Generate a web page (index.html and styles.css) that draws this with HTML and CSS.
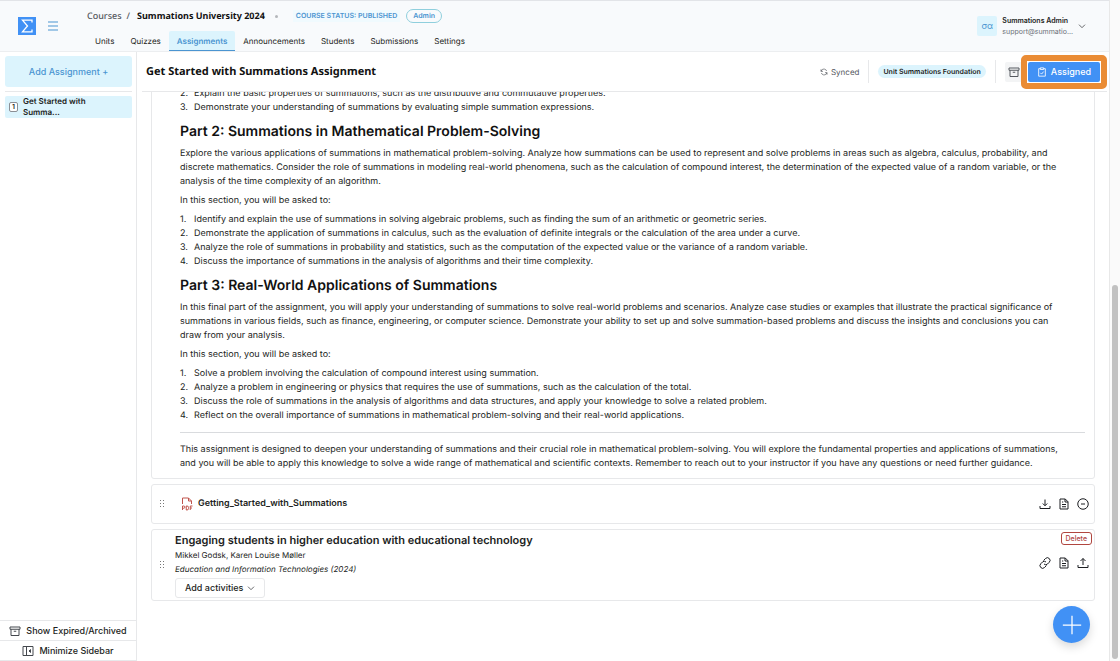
FILE: index.html
```html
<!DOCTYPE html>
<html lang="en">
  <head>
    <meta charset="UTF-8" />
    <meta name="viewport" content="width=device-width, initial-scale=1.0" />
    <title>Get Started with Summations Assignment</title>
    <link rel="stylesheet" href="styles.css">
  </head>
  <body>
    <!-- shared icons -->
    <svg class="sprite" aria-hidden="true">
      <symbol id="archive" viewBox="0 0 24 24">
        <path d="M2 4h20v4.500H2zM4 8.500V21h16V8.500M9.500 12.500h5" />
      </symbol>
      <symbol id="chevron" viewBox="0 0 24 24">
        <path d="M3 8l9 9 9-9" />
      </symbol>
      <symbol id="grip" viewBox="0 0 6 10">
        <path d="M1 1.500h1M4 1.500h1M1 4.500h1M4 4.500h1M1 7.500h1M4 7.500h1" />
      </symbol>
      <symbol id="doc" viewBox="0 0 24 24">
        <path d="M4 2h10.500L20 7.500V22H4zM14 2v6h6M8 8h2.500M8 13h8M8 17.500h8" />
      </symbol>
    </svg>

    <div class="window">
      <div class="app">
        <header class="topbar">
          <a class="logo" href="#" aria-label="Home">
            <svg viewBox="0 0 18 18"><path d="M14 5.500V3.200H4.500L9.500 9l-5 5.800H14v-2.300" /></svg>
          </a>
          <button class="icon-btn burger" aria-label="Menu">
            <svg viewBox="0 0 12 12"><path d="M1 2h10M1 6h10M1 10h10" /></svg>
          </button>
          <div class="course">
            <div class="crumbs">
              <a class="crumb" href="#">Courses</a>
              <span class="slash">/</span>
              <strong>Summations University 2024</strong>
              <span class="dot"></span>
              <span class="status">COURSE STATUS: PUBLISHED</span>
              <span class="role">Admin</span>
            </div>
            <nav class="tabs">
              <a href="#">Units</a>
              <a href="#">Quizzes</a>
              <a class="active" href="#">Assignments</a>
              <a href="#">Announcements</a>
              <a href="#">Students</a>
              <a href="#">Submissions</a>
              <a href="#">Settings</a>
            </nav>
          </div>
          <button class="user">
            <span class="avatar">σα</span>
            <span class="user-info">
              <span class="user-name">Summations Admin</span>
              <span class="user-mail">support@summatio...</span>
            </span>
            <svg class="chev"><use href="#chevron" /></svg>
          </button>
        </header>

        <div class="columns">
          <aside class="sidebar">
            <div class="side-top">
              <button class="add-btn">Add Assignment +</button>
            </div>
            <a class="side-item" href="#">
              <span class="num">1</span>
              <span>Get Started with Summa...</span>
            </a>
            <div class="side-bottom">
              <button><svg><use href="#archive" /></svg>Show Expired/Archived</button>
              <button>
                <svg viewBox="0 0 24 24"><path d="M2 3h20v18H2zM9 3v18M17 9l-3 3 3 3z" /></svg>Minimize Sidebar
              </button>
            </div>
          </aside>

          <main>
            <div class="title-bar">
              <h1>Get Started with Summations Assignment</h1>
              <span class="synced">
                <svg viewBox="0 0 24 24"><path d="M3 4v6h6M21 20v-6h-6M20 9a9 9 0 0 0-15-3L3 10M4 15a9 9 0 0 0 15 3l2-4" /></svg>Synced
              </span>
              <span class="unit-wrap"><span class="unit">Unit Summations Foundation</span></span>
              <button class="archive-btn" aria-label="Archive"><svg><use href="#archive" /></svg></button>
              <span class="spotlight">
                <button class="assigned">
                  <svg viewBox="0 0 24 24"><path d="M8 4H4v18h16V4h-4M8 2h8v4H8zM8 14l3 3 5-6" /></svg>Assigned
                </button>
              </span>
            </div>

            <div class="content">
              <article class="card text">
                <ol start="2">
                  <li>Explain the basic properties of summations, such as the distributive and commutative properties.</li>
                  <li>Demonstrate your understanding of summations by evaluating simple summation expressions.</li>
                </ol>
                <h2>Part 2: Summations in Mathematical Problem-Solving</h2>
                <p>Explore the various applications of summations in mathematical problem-solving. Analyze how summations can be used to represent and solve problems in areas such as algebra, calculus, probability, and discrete mathematics. Consider the role of summations in modeling real-world phenomena, such as the calculation of compound interest, the determination of the expected value of a random variable, or the analysis of the time complexity of an algorithm.</p>
                <p>In this section, you will be asked to:</p>
                <ol>
                  <li>Identify and explain the use of summations in solving algebraic problems, such as finding the sum of an arithmetic or geometric series.</li>
                  <li>Demonstrate the application of summations in calculus, such as the evaluation of definite integrals or the calculation of the area under a curve.</li>
                  <li>Analyze the role of summations in probability and statistics, such as the computation of the expected value or the variance of a random variable.</li>
                  <li>Discuss the importance of summations in the analysis of algorithms and their time complexity.</li>
                </ol>
                <h2>Part 3: Real-World Applications of Summations</h2>
                <p>In this final part of the assignment, you will apply your understanding of summations to solve real-world problems and scenarios. Analyze case studies or examples that illustrate the practical significance of summations in various fields, such as finance, engineering, or computer science. Demonstrate your ability to set up and solve summation-based problems and discuss the insights and conclusions you can draw from your analysis.</p>
                <p>In this section, you will be asked to:</p>
                <ol>
                  <li>Solve a problem involving the calculation of compound interest using summation.</li>
                  <li>Analyze a problem in engineering or physics that requires the use of summations, such as the calculation of the total.</li>
                  <li>Discuss the role of summations in the analysis of algorithms and data structures, and apply your knowledge to solve a related problem.</li>
                  <li>Reflect on the overall importance of summations in mathematical problem-solving and their real-world applications.</li>
                </ol>
                <hr>
                <p>This assignment is designed to deepen your understanding of summations and their crucial role in mathematical problem-solving. You will explore the fundamental properties and applications of summations, and you will be able to apply this knowledge to solve a wide range of mathematical and scientific contexts. Remember to reach out to your instructor if you have any questions or need further guidance.</p>
              </article>

              <section class="card file">
                <svg class="grip"><use href="#grip" /></svg>
                <svg class="pdf" viewBox="0 0 24 28">
                  <path d="M3 14V2h12l6 6v6M15 2v6h6" />
                  <path d="M3 26v-8h2.500a2 2 0 0 1 0 4.500H3M10.500 18v8h1.500a3 3 0 0 0 3-3v-2a3 3 0 0 0-3-3zM18.500 26v-8H23M18.500 22H22" />
                </svg>
                <a class="file-name" href="#">Getting_Started_with_Summations</a>
                <div class="actions">
                  <button class="icon-btn" aria-label="Download"><svg viewBox="0 0 24 24"><path d="M12 3v12M7.500 11l4.500 4.500 4.500-4.500M2 16v5h20v-5" /></svg></button>
                  <button class="icon-btn" aria-label="Notes"><svg><use href="#doc" /></svg></button>
                  <button class="icon-btn" aria-label="Remove"><svg viewBox="0 0 24 24"><circle cx="12" cy="12" r="10.500" /><path d="M8 12h8" /></svg></button>
                </div>
              </section>

              <section class="card paper">
                <svg class="grip"><use href="#grip" /></svg>
                <div class="paper-info">
                  <h3>Engaging students in higher education with educational technology</h3>
                  <p>Mikkel Godsk, Karen Louise Møller</p>
                  <p><em>Education and Information Technologies (2024)</em></p>
                  <button class="activities">Add activities <svg class="chev"><use href="#chevron" /></svg></button>
                </div>
                <div class="paper-side">
                  <button class="delete">Delete</button>
                  <div class="actions">
                    <button class="icon-btn" aria-label="Copy link"><svg viewBox="0 0 24 24"><path d="M9 7l4-4a5 5 0 0 1 7.500 7.500l-3.500 3.500a5 5 0 0 1-7 0M15 17l-4 4a5 5 0 0 1-7.500-7.500L7 10a5 5 0 0 1 7 0" /></svg></button>
                    <button class="icon-btn" aria-label="Notes"><svg><use href="#doc" /></svg></button>
                    <button class="icon-btn" aria-label="Upload"><svg viewBox="0 0 24 24"><path d="M12 16V3M7 8l5-5 5 5M2 16v5h20v-5" /></svg></button>
                  </div>
                </div>
              </section>
            </div>
          </main>
        </div>
      </div>
      <div class="scrollbar"><div class="thumb"></div></div>
    </div>

    <button class="fab" aria-label="Add"><svg viewBox="0 0 24 24"><path d="M12 1v22M1 12h22" /></svg></button>
  </body>
</html>
```
FILE: styles.css
```css
* {
  box-sizing: border-box;
}
:root {
  --blue: #4191f5;
  --link: #4b95d1;
  --pale: #dcf4fd;
  --line: #e7e8ea;
}
body {
  margin: 0;
  font-family: Inter, "Liberation Sans", sans-serif;
  font-size: 9px;
  line-height: 14px;
  text-rendering: geometricPrecision;
  color: #1c1e22;
  background-color: white;
}
h1,
h2,
h3,
p,
ol {
  margin: 0;
}
a {
  color: inherit;
  text-decoration: none;
}
button {
  display: flex;
  align-items: center;
  justify-content: center;
  padding: 0;
  border: none;
  background: none;
  font: inherit;
  color: inherit;
  cursor: pointer;
}
svg {
  flex: none;
  width: 12px;
  height: 12px;
  fill: none;
  stroke: currentColor;
  stroke-width: 2;
}
.sprite {
  position: absolute;
  width: 0;
  height: 0;
}
.window {
  display: flex;
  height: 100vh;
}
.app {
  flex: 1;
  min-width: 0;
  display: flex;
  flex-direction: column;
}

/* top bar */
.topbar {
  display: flex;
  align-items: center;
  height: 52px;
  flex: none;
  padding: 0 23px 0 18px;
  background-color: #f8fafc;
  border-top: 1px solid #e2e4e8;
  border-bottom: 1px solid #eceef0;
}
.logo {
  display: flex;
  background-color: var(--blue);
  color: white;
}
.logo svg {
  width: 18px;
  height: 18px;
  stroke-width: 1.3;
}
.burger {
  margin-left: 11px;
  color: var(--link);
}
.burger svg {
  stroke-width: 1;
}
.course {
  align-self: stretch;
  flex: 1;
  display: flex;
  flex-direction: column;
  justify-content: space-between;
  padding: 8px 0 0 28px;
}
.crumbs {
  display: flex;
  align-items: center;
  font-family: "Noto Sans", sans-serif;
}
.crumb,
.slash {
  color: #55585e;
  font-weight: 500;
}
.slash {
  margin: 0 7px 0 5px;
}
.crumbs strong {
  color: #111;
}
.dot {
  width: 3px;
  height: 3px;
  margin: 0 15px 0 10px;
  border-radius: 50%;
  background-color: #b4b7bb;
}
.status,
.role {
  font-family: Inter, sans-serif;
  font-size: 7px;
  line-height: 12px;
  font-weight: 600;
  color: var(--link);
}
.status {
  padding: 0 3px;
  background-color: #f0fafe;
}
.role {
  margin-left: 6px;
  padding: 0 6px;
  border: 1px solid #8fcfdd;
  border-radius: 7px;
}
.tabs {
  display: flex;
  font-size: 8px;
}
.tabs a {
  padding: 3px 8px 1px;
  line-height: 15px;
  border-bottom: 1px solid transparent;
}
.tabs .active {
  color: var(--link);
  font-weight: 600;
  background-color: var(--pale);
  border-color: var(--link);
  border-radius: 2px 2px 0 0;
}
.user {
  text-align: left;
  gap: 5px;
}
.avatar {
  width: 20px;
  line-height: 20px;
  text-align: center;
  color: var(--link);
  background-color: var(--pale);
  border-radius: 2px;
}
.user-info {
  display: flex;
  flex-direction: column;
  font-size: 7px;
  line-height: 11px;
}
.user-name {
  font-weight: 600;
}
.user-mail {
  color: #6b7078;
}
.chev {
  width: 8px;
  height: 8px;
}

/* sidebar */
.columns {
  flex: 1;
  min-height: 0;
  display: flex;
}
.sidebar {
  flex: none;
  width: 137px;
  display: flex;
  flex-direction: column;
  border-right: 1px solid var(--line);
}
.side-top {
  margin: 0 4px 0 5px;
  padding: 4px 0;
  border-bottom: 1px solid var(--line);
}
.add-btn {
  width: 100%;
  height: 31px;
  font-weight: 500;
  color: var(--link);
  background-color: var(--pale);
  border-radius: 3px;
}
.side-item {
  display: flex;
  align-items: center;
  gap: 5px;
  margin: 4px 4px 0 5px;
  padding: 0 24px 0 4px;
  font-size: 8px;
  line-height: 11px;
  font-weight: 600;
  background-color: var(--pale);
  border-radius: 2px;
}
.num {
  width: 9px;
  flex: none;
  font-size: 7px;
  line-height: 8px;
  text-align: center;
  background-color: white;
  border: 1px solid #8b8f95;
  border-radius: 2px;
}
.side-bottom {
  margin-top: auto;
  border-bottom: 1px solid var(--line);
}
.side-bottom button {
  width: 100%;
  height: 20px;
  gap: 5px;
  font-weight: 500;
  border-top: 1px solid var(--line);
}
.side-bottom svg {
  color: #44484e;
}

/* title bar */
main {
  flex: 1;
  min-width: 0;
  display: flex;
  flex-direction: column;
}
.title-bar {
  display: flex;
  align-items: center;
  flex: none;
  height: 40px;
  margin: 0 2px 0 5px;
  padding-left: 4px;
  border-bottom: 1px solid var(--line);
}
h1 {
  flex: 1;
  font-family: "Noto Sans", sans-serif;
  font-size: 11px;
  color: #111;
}
.synced {
  display: flex;
  align-items: center;
  gap: 3px;
  font-size: 8px;
  color: #55585e;
}
.synced svg {
  width: 8px;
  height: 8px;
}
.unit-wrap {
  display: flex;
  margin: 0 9px;
  padding: 5px 9px;
  border: solid var(--line);
  border-width: 0 1px;
}
.unit {
  padding: 0 5px;
  font-size: 7px;
  line-height: 13px;
  font-weight: 600;
  background-color: var(--pale);
  border-radius: 7px;
}
.archive-btn {
  width: 18px;
  height: 20px;
  color: #55585e;
  background-color: #f3f4f5;
  border-radius: 2px;
}
/* frame sits over the edge of the archive button */
.spotlight {
  z-index: 1;
  margin-left: -2px;
  padding: 1px;
  border: 6px solid #ea8c35;
  border-radius: 5px;
  background-color: white;
}
.assigned {
  height: 20px;
  padding: 0 9px;
  gap: 4px;
  font-weight: 500;
  color: white;
  background-color: var(--blue);
  border-radius: 2px;
}
.assigned svg {
  width: 10px;
  height: 10px;
}

/* assignment content */
.content {
  flex: 1;
  min-height: 0;
  overflow: hidden;
  display: flex;
  flex-direction: column;
  gap: 5px;
  padding: 0 14px;
}
.card {
  flex: none;
  border: 1px solid var(--line);
  border-radius: 3px;
}
.text {
  display: flex;
  flex-direction: column;
  gap: 5px;
  margin-top: -6px;
  padding: 0 9px 7px 28px;
}
.text p {
  padding-right: 18px;
}
.text ol {
  padding: 0;
  list-style: none;
}
.text li::before {
  content: counter(list-item) ".";
  display: inline-block;
  width: 14px;
}
.text h2 {
  margin-top: 2px;
  font-size: 14px;
  line-height: 20px;
  font-weight: 600;
  color: #111;
}
hr {
  width: 100%;
  margin: 4px 0 5px;
  border: none;
  border-top: 1px solid #d9dbde;
}
.file {
  display: flex;
  align-items: center;
  height: 40px;
  padding: 0 5px 0 7px;
}
.grip {
  width: 6px;
  height: 10px;
  stroke: #777;
  stroke-width: 1;
}
.pdf {
  width: 12px;
  height: 14px;
  margin: 0 5px 0 16px;
  stroke: #c0544c;
}
.file-name {
  flex: 1;
  font-weight: 600;
}
.actions {
  display: flex;
  gap: 7px;
}
.paper {
  display: flex;
  align-items: center;
  padding: 2px 2px 2px 7px;
}
.paper-info {
  flex: 1;
  margin-left: 10px;
}
h3 {
  font-size: 11px;
  line-height: 16px;
  font-weight: 600;
}
.paper-info p {
  font-size: 8px;
}
.activities {
  height: 20px;
  margin-top: 2px;
  padding: 0 9px;
  gap: 4px;
  font-weight: 500;
  border: 1px solid var(--line);
  border-radius: 3px;
}
.paper-side {
  align-self: stretch;
  display: flex;
  flex-direction: column;
  align-items: flex-end;
  gap: 12px;
}
.paper-side .actions {
  padding-right: 3px;
}
.delete {
  height: 13px;
  padding: 0 4px;
  font-size: 7px;
  font-weight: 500;
  color: #b0463f;
  border: 1px solid #b0463f;
  border-radius: 3px;
}

/* page scrollbar */
.scrollbar {
  flex: none;
  width: 11px;
  display: flex;
  flex-direction: column;
  justify-content: flex-end;
  padding: 2px;
  background-color: #fafafa;
  border-left: 1px solid #e8e8e8;
}
.thumb {
  height: 57%;
  border-radius: 3px;
  background-color: #c1c1c1;
}
.fab {
  position: fixed;
  right: 30px;
  bottom: 18px;
  width: 37px;
  height: 37px;
  border-radius: 50%;
  color: white;
  background-color: var(--blue);
  box-shadow: 0 4px 10px rgba(0, 0, 0, 0.15);
}
.fab svg {
  width: 20px;
  height: 20px;
  stroke-width: 1.5;
}
```
